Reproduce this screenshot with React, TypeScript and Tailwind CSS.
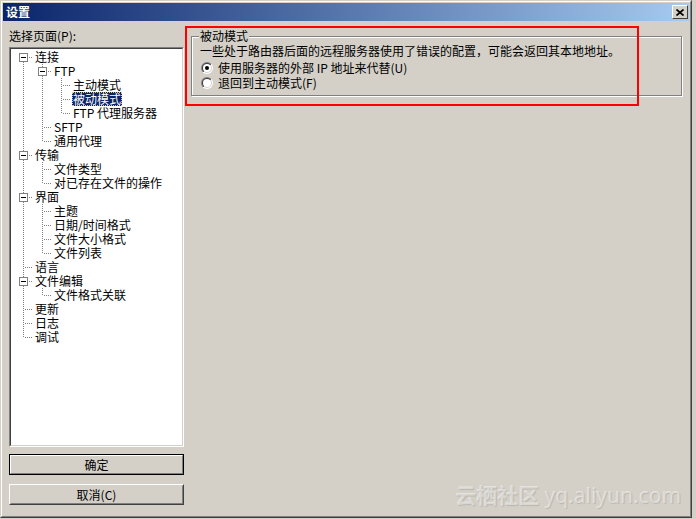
type Node = { label: string; depth: number; open?: boolean; selected?: boolean };

const tree: Node[] = [
  { label: "连接", depth: 0, open: true },
  { label: "FTP", depth: 1, open: true },
  { label: "主动模式", depth: 2 },
  { label: "被动模式", depth: 2, selected: true },
  { label: "FTP 代理服务器", depth: 2 },
  { label: "SFTP", depth: 1 },
  { label: "通用代理", depth: 1 },
  { label: "传输", depth: 0, open: true },
  { label: "文件类型", depth: 1 },
  { label: "对已存在文件的操作", depth: 1 },
  { label: "界面", depth: 0, open: true },
  { label: "主题", depth: 1 },
  { label: "日期/时间格式", depth: 1 },
  { label: "文件大小格式", depth: 1 },
  { label: "文件列表", depth: 1 },
  { label: "语言", depth: 0 },
  { label: "文件编辑", depth: 0, open: true },
  { label: "文件格式关联", depth: 1 },
  { label: "更新", depth: 0 },
  { label: "日志", depth: 0 },
  { label: "调试", depth: 0 },
];

// does item i have a later sibling at the same depth
function hasNext(i: number) {
  const d = tree[i].depth;
  for (let j = i + 1; j < tree.length; j++) {
    if (tree[j].depth < d) return false;
    if (tree[j].depth === d) return true;
  }
  return false;
}

function ancestorContinues(i: number, k: number) {
  for (let j = i - 1; j >= 0; j--) {
    if (tree[j].depth === k) return hasNext(j);
  }
  return false;
}

function dots(x0: number, y0: number, x1: number, y1: number) {
  const out = [];
  if (x0 === x1) {
    for (let y = y0; y < y1; y += 2) out.push(<rect key={"v" + y} x={x0} y={y} width={1} height={1} />);
  } else {
    for (let x = x0; x < x1; x += 2) out.push(<rect key={"h" + x} x={x} y={y0} width={1} height={1} />);
  }
  return out;
}

function Cell({ top, bottom, branch, box }: { top?: boolean; bottom?: boolean; branch?: boolean; box?: boolean }) {
  return (
    <svg width="19" height="14" shapeRendering="crispEdges" className="shrink-0">
      <g fill="#808080">
        {top && dots(9, 0, 9, 8)}
        {bottom && dots(9, 8, 9, 14)}
        {branch && dots(11, 7, 19, 7)}
      </g>
      {box && (
        <>
          <rect x="5.5" y="3.5" width="8" height="8" fill="#fff" stroke="#808080" />
          <rect x="7" y="7" width="5" height="1" fill="#000" />
        </>
      )}
    </svg>
  );
}

function TreeRow({ node, i }: { node: Node; i: number }) {
  const cells = [];
  for (let k = 0; k < node.depth; k++) {
    cells.push(<Cell key={k} top={ancestorContinues(i, k)} bottom={ancestorContinues(i, k)} />);
  }
  return (
    <div className="flex h-[14px] items-center">
      {cells}
      <Cell top={i !== 0} bottom={hasNext(i)} branch box={node.open} />
      <span
        className={
          "ml-[1px] h-[14px] whitespace-nowrap px-[1px] leading-[14px] " +
          (node.selected ? "bg-[#0a246a] text-white outline-1 outline-dotted outline-offset-[-1px] outline-[#d8c890]" : "")
        }
      >
        {node.label}
      </span>
    </div>
  );
}

function Radio({ checked, id }: { checked?: boolean; id: string }) {
  return (
    <svg width="12" height="12" className="shrink-0">
      <defs>
        <linearGradient id={id + "a"} x1="0" y1="0" x2="1" y2="1">
          <stop offset="0.5" stopColor="#808080" />
          <stop offset="0.5" stopColor="#ffffff" />
        </linearGradient>
        <linearGradient id={id + "b"} x1="0" y1="0" x2="1" y2="1">
          <stop offset="0.5" stopColor="#404040" />
          <stop offset="0.5" stopColor="#d4d0c8" />
        </linearGradient>
      </defs>
      <circle cx="6" cy="6" r="6" fill={`url(#${id}a)`} />
      <circle cx="6" cy="6" r="5" fill={`url(#${id}b)`} />
      <circle cx="6" cy="6" r="4" fill="#fff" />
      {checked && <circle cx="6" cy="6" r="2" fill="#000" />}
    </svg>
  );
}

export default function App() {
  return (
    <div className="relative h-[519px] w-[696px] overflow-hidden bg-[#d4d0c8] font-['Noto_Sans_CJK_SC',sans-serif] text-[12px] leading-[14px] text-black">
      {/* dialog frame */}
      <div className="h-[518px] w-[692px] border border-[#d4d0c8] border-b-[#404040] border-r-[#404040]">
        <div className="flex h-full flex-col border border-white border-b-[#808080] border-r-[#808080] p-[1px]">
          {/* title bar */}
          <div className="flex h-[18px] items-center bg-[linear-gradient(to_right,#0a246a,#a6caf0)] pl-[3px] pr-[1px]">
            <span className="font-bold text-white">设置</span>
            <div className="ml-auto flex h-[14px] w-[16px] items-center justify-center border border-white border-b-[#404040] border-r-[#404040] bg-[#d4d0c8]">
              <svg width="8" height="7" viewBox="0 0 8 7">
                <path d="M0.5 0.5 L7.5 6.5 M7.5 0.5 L0.5 6.5" stroke="#000" strokeWidth="1.7" />
              </svg>
            </div>
          </div>

          {/* body */}
          <div className="flex flex-1 gap-[7px] px-[6px] pt-[8px]">
            <div className="flex w-[175px] flex-col">
              <div className="h-[14px]">选择页面(P):</div>
              <div className="mt-[4px] h-[400px] border border-[#808080] border-b-white border-r-white">
                <div className="h-full border border-[#404040] border-b-[#d4d0c8] border-r-[#d4d0c8] bg-white pl-[3px] pt-[1px]">
                  {tree.map((n, i) => (
                    <TreeRow key={i} node={n} i={i} />
                  ))}
                </div>
              </div>
              <div className="mt-[7px] h-[21px] border border-black">
                <div className="flex h-full items-center justify-center border border-white border-b-[#808080] border-r-[#808080]">
                  确定
                </div>
              </div>
              <div className="mt-[9px] h-[21px] border border-white border-b-[#404040] border-r-[#404040]">
                <div className="flex h-full items-center justify-center border border-transparent border-b-[#808080] border-r-[#808080]">
                  取消(C)
                </div>
              </div>
            </div>

            <div className="flex-1 pr-[1px] pt-[7px]">
              <div className="relative border border-[#808080] pb-[5px] pl-[8px] pt-[7px] shadow-[1px_1px_0_#fff,inset_1px_1px_0_#fff]">
                <span className="absolute left-[7px] top-[-8px] bg-[#d4d0c8] px-[1px]">被动模式</span>
                <div className="h-[14px] whitespace-nowrap">一些处于路由器后面的远程服务器使用了错误的配置，可能会返回其本地地址。</div>
                <div className="mt-[2px] flex h-[15px] items-center gap-[5px] pl-[1px]">
                  <Radio id="r1" checked />
                  <span>使用服务器的外部 IP 地址来代替(U)</span>
                </div>
                <div className="flex h-[15px] items-center gap-[5px] pl-[1px]">
                  <Radio id="r2" />
                  <span>退回到主动模式(F)</span>
                </div>
              </div>
            </div>
          </div>
        </div>
      </div>

      {/* annotation */}
      <div className="absolute left-[185px] top-[26px] h-[80px] w-[454px] border-2 border-[#ff0000]" />

      {/* watermark */}
      <div className="absolute left-[455px] top-[481px] whitespace-nowrap font-['Noto_Sans',sans-serif] text-[21px] leading-[26px] text-white/45 [text-shadow:1px_1px_1px_rgba(0,0,0,0.12)]">
        <span className="font-['Noto_Sans_CJK_SC',sans-serif] font-bold">云栖社区</span> yq.aliyun.com
      </div>
    </div>
  );
}
